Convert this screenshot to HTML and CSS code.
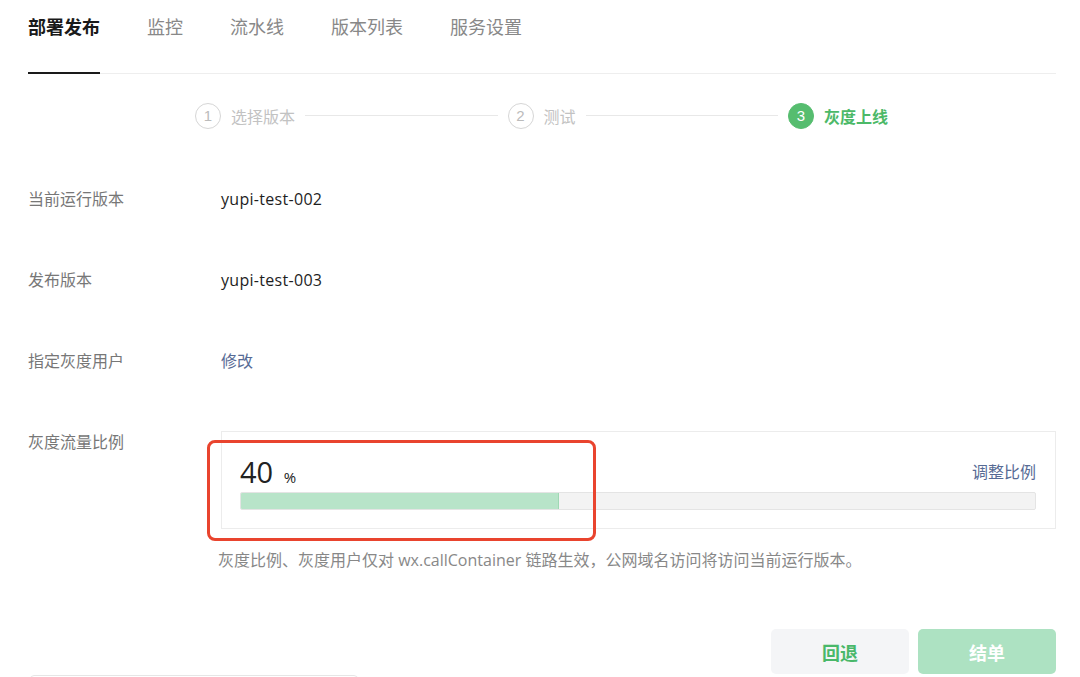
FILE: index.html
```html
<!DOCTYPE html>
<html lang="zh-CN">
<head>
    <meta charset="UTF-8">
    <meta name="viewport" content="width=device-width, initial-scale=1.0">
    <title>部署发布</title>
    <link rel="stylesheet" href="styles.css">
</head>
<body>
    <div class="page">
        <nav class="tabs">
            <a class="tab active" href="#">部署发布</a>
            <a class="tab" href="#">监控</a>
            <a class="tab" href="#">流水线</a>
            <a class="tab" href="#">版本列表</a>
            <a class="tab" href="#">服务设置</a>
        </nav>

        <div class="steps">
            <div class="step">
                <span class="step-num">1</span>
                <span class="step-text">选择版本</span>
            </div>
            <div class="step-line"></div>
            <div class="step">
                <span class="step-num">2</span>
                <span class="step-text">测试</span>
            </div>
            <div class="step-line"></div>
            <div class="step current">
                <span class="step-num">3</span>
                <span class="step-text">灰度上线</span>
            </div>
        </div>

        <div class="form">
            <div class="form-row">
                <div class="form-label">当前运行版本</div>
                <div class="form-value">yupi-test-002</div>
            </div>
            <div class="form-row">
                <div class="form-label">发布版本</div>
                <div class="form-value">yupi-test-003</div>
            </div>
            <div class="form-row">
                <div class="form-label">指定灰度用户</div>
                <div class="form-value"><a class="link" href="#">修改</a></div>
            </div>
            <div class="form-row ratio-row">
                <div class="form-label">灰度流量比例</div>
                <div class="form-value">
                    <div class="ratio-box">
                        <div class="ratio-head">
                            <div class="ratio-num">40 <span class="ratio-unit">%</span></div>
                            <a class="link" href="#">调整比例</a>
                        </div>
                        <div class="progress">
                            <div class="progress-fill" style="width: 40%"></div>
                        </div>
                        <div class="highlight"></div>
                    </div>
                    <p class="ratio-tip">灰度比例、灰度用户仅对 wx.callContainer 链路生效，公网域名访问将访问当前运行版本。</p>
                </div>
            </div>
        </div>

        <div class="actions">
            <div class="peek-box"></div>
            <div class="buttons">
                <button class="btn btn-back">回退</button>
                <button class="btn btn-done">结单</button>
            </div>
        </div>
    </div>
</body>
</html>
```

FILE: styles.css
```css
/* 基本重置 */
* {
    margin: 0;
    padding: 0;
    box-sizing: border-box;
}

body {
    font-family: "Open Sans", "Noto Sans CJK SC", sans-serif;
    background: #fff;
    color: #333;
    overflow: hidden;
}

.page {
    width: 1080px;
    height: 677px;
    padding: 0 24px 0 28px;
}

/* 顶部标签 */
.tabs {
    display: flex;
    height: 74px;
    border-bottom: 1px solid #eeeeee;
}

.tab {
    display: block;
    font-family: "Noto Sans CJK SC", sans-serif;
    font-size: 18px;
    line-height: 20px;
    padding-top: 16px;
    color: #888;
    text-decoration: none;
    margin-right: 47px;
}

.tab.active {
    color: #1a1a1a;
    font-weight: bold;
    border-bottom: 2px solid #1a1a1a;
    margin-bottom: -1px;
}

/* 步骤条 */
.steps {
    display: flex;
    align-items: center;
    height: 83px;
    padding: 0 168px 0 167px;
}

.step {
    display: flex;
    align-items: center;
    gap: 10px;
    color: #c2c2c2;
    font-family: "Noto Sans CJK SC", sans-serif;
    font-size: 16px;
}

.step-num {
    width: 26px;
    height: 26px;
    border-radius: 50%;
    border: 1px solid #d6d6d6;
    display: flex;
    align-items: center;
    justify-content: center;
    font-family: "Liberation Sans", sans-serif;
    font-size: 15px;
    color: #bbb;
}

.step-line {
    flex: 1;
    height: 1px;
    background: #e8e8e8;
    margin: 0 10px;
}

.step.current .step-num {
    background: #56bd6f;
    border-color: #56bd6f;
    color: #fff;
}

.step.current .step-text {
    color: #4cb968;
    font-weight: bold;
}

/* 表单 */
.form {
    padding-top: 31px;
}

.form-row {
    display: flex;
    height: 81px;
    font-size: 16px;
    line-height: 22px;
}

.form-label {
    width: 193px;
    color: #777;
}

.form-value {
    color: #1e1e1e;
    letter-spacing: 0.3px;
}

.link {
    color: #576b95;
    text-decoration: none;
    letter-spacing: 0;
}

.ratio-row {
    height: auto;
}

.ratio-row .form-value {
    flex: 1;
    letter-spacing: 0;
}

.ratio-box {
    position: relative;
    border: 1px solid #ececec;
    padding: 25px 19px 18px 18px;
    height: 98px;
}

.ratio-head {
    display: flex;
    justify-content: space-between;
    align-items: flex-end;
}

.ratio-num {
    font-size: 29px;
    line-height: 30px;
    color: #222;
}

.ratio-unit {
    font-size: 15px;
    margin-left: 3px;
}

.ratio-head .link {
    margin-bottom: 9px;
}

.progress {
    height: 18px;
    background: #f3f3f3;
    border: 1px solid #e4e4e4;
    border-radius: 2px;
    overflow: hidden;
}

.progress-fill {
    height: 100%;
    background: #b8e4c9;
    border-right: 1px solid #9fd8b4;
}

/* 红色标注框 */
.highlight {
    position: absolute;
    left: -15px;
    top: 8px;
    width: 389px;
    height: 101px;
    border: 3px solid #e9442e;
    border-radius: 8px;
}

.ratio-tip {
    margin-top: 20px;
    margin-left: -3px;
    font-size: 16px;
    color: #888;
}

/* 底部按钮 */
.actions {
    display: flex;
    justify-content: space-between;
    align-items: flex-end;
    margin-top: 58px;
}

.peek-box {
    width: 328px;
    height: 12px;
    margin-left: 2px;
    margin-bottom: -13px;
    border: 1px solid #e6e6e6;
    border-radius: 4px;
}

.buttons {
    display: flex;
    gap: 9px;
}

.btn {
    width: 138px;
    height: 45px;
    border: none;
    border-radius: 5px;
    font-family: "Noto Sans CJK SC", sans-serif;
    font-size: 18px;
    font-weight: bold;
}

.btn-back {
    background: #f4f5f7;
    color: #49b86a;
}

.btn-done {
    background: #ade2c2;
    color: #fff;
}
```
